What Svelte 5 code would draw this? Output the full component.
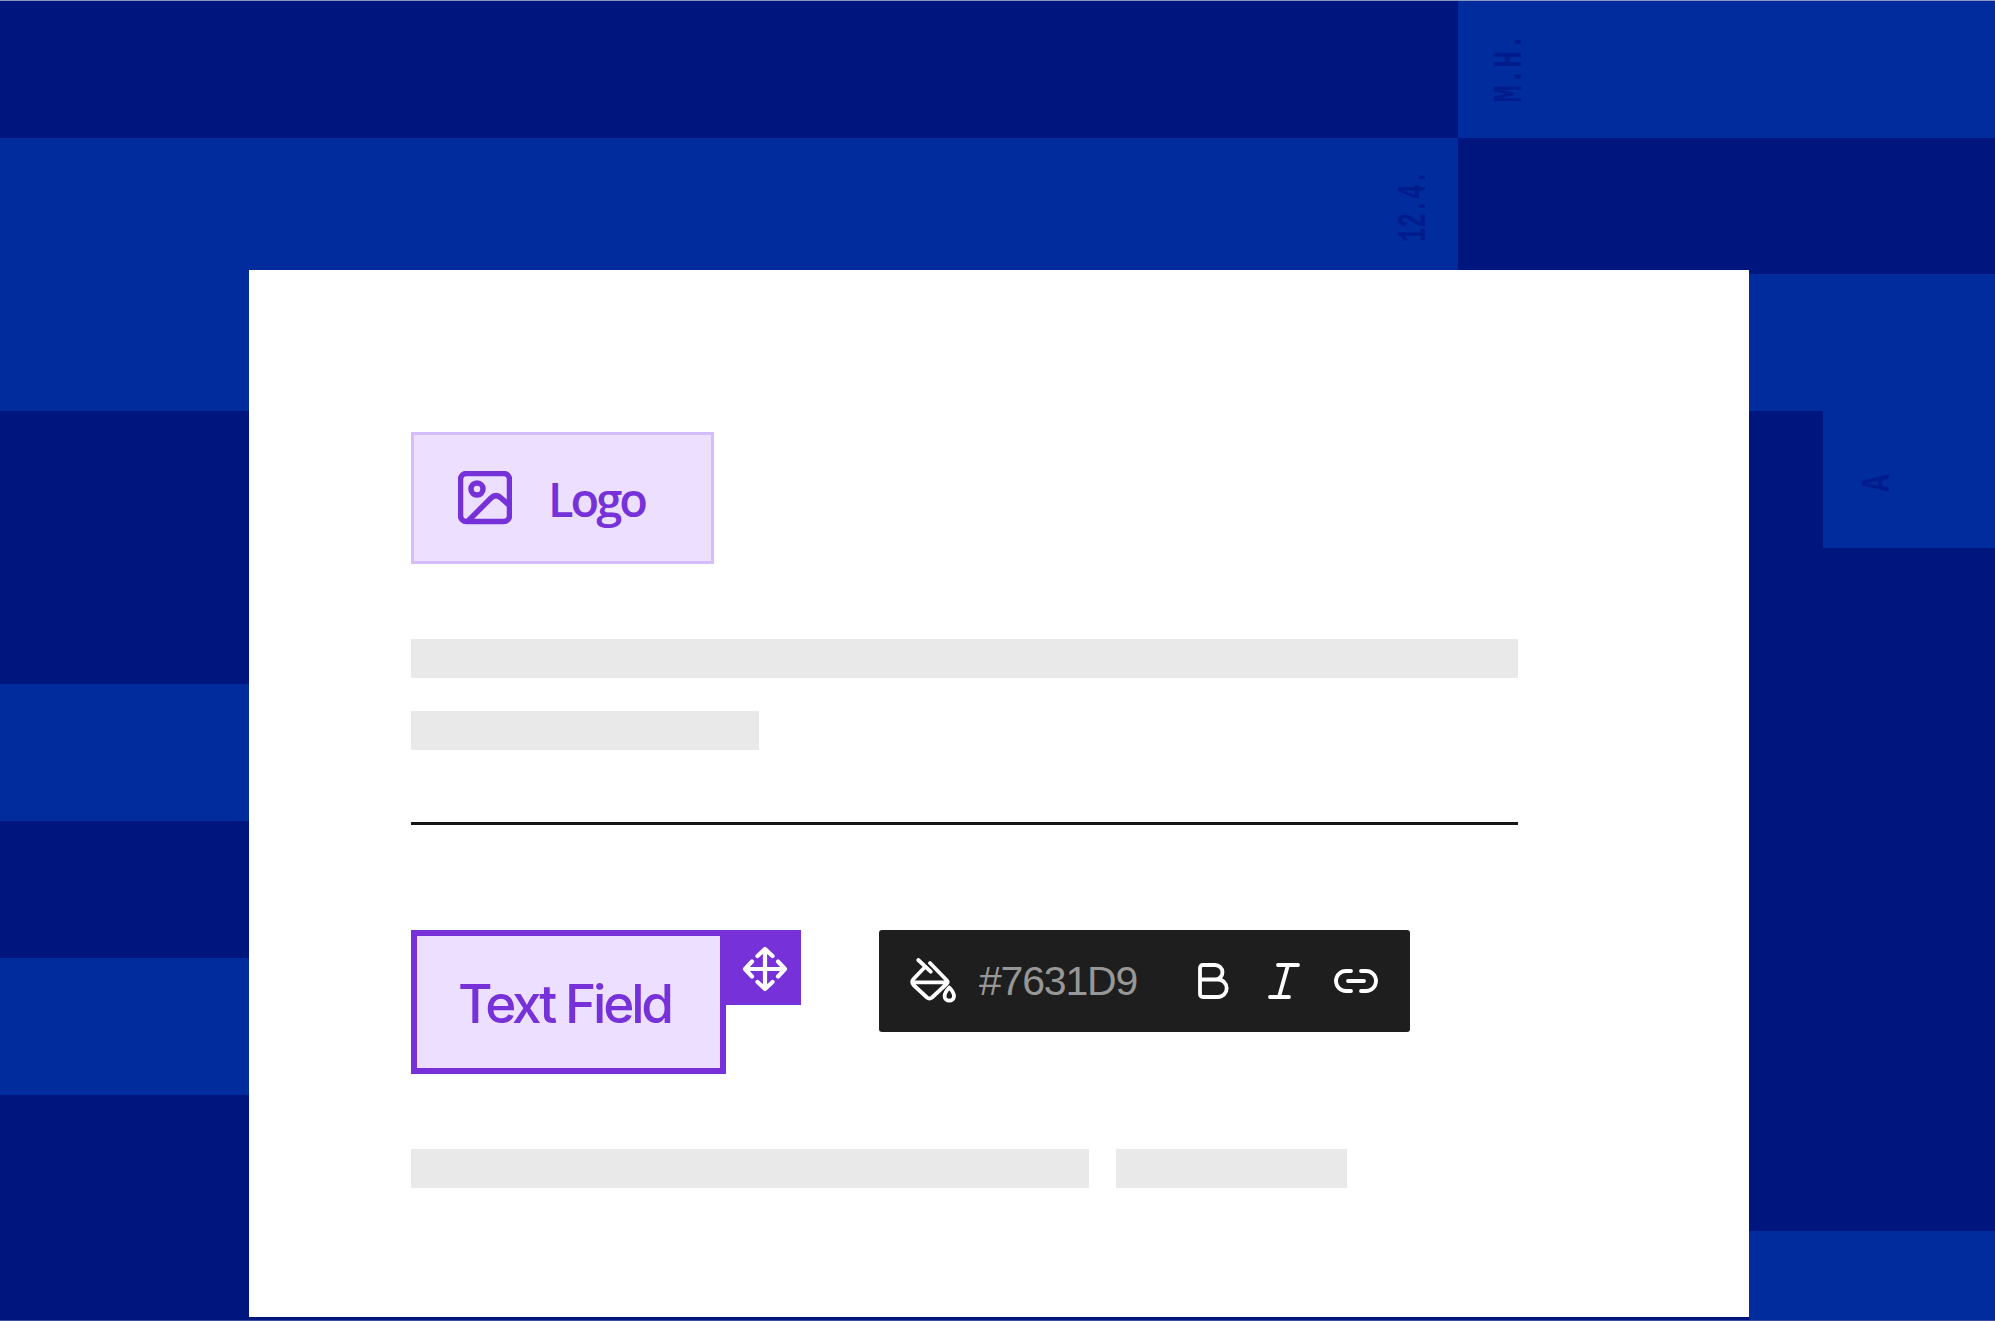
<script>
  // background strips, x widths in px, last segment fills the row
  const rows = [
    [{ w: 1458, c: "dark" }, { w: 537, c: "light", label: "M.H." }],
    [{ w: 1458, c: "light", label: "12.4." }, { w: 537, c: "dark" }],
    [{ w: 1995, c: "light" }],
    [{ w: 1823, c: "dark" }, { w: 172, c: "light", label: "A" }],
    [{ w: 1995, c: "dark" }],
    [{ w: 249, c: "light" }, { w: 1746, c: "dark" }],
    [{ w: 1995, c: "dark" }],
    [{ w: 249, c: "light" }, { w: 1746, c: "dark" }],
    [{ w: 1995, c: "dark" }],
    [{ w: 1749, c: "dark" }, { w: 246, c: "light" }],
  ];
</script>

<div class="page">
  <div class="strips">
    {#each rows as row}
      <div class="strip">
        {#each row as seg}
          <div class="seg {seg.c}" style="width: {seg.w}px">
            {#if seg.label}<span class="stamp stamp-{seg.label.length}">{seg.label}</span>{/if}
          </div>
        {/each}
      </div>
    {/each}
  </div>

  <div class="card">
    <div class="logo">
      <svg width="54" height="54" viewBox="0 0 54 54" fill="none" stroke="currentColor" stroke-width="5.5" stroke-linecap="round" stroke-linejoin="round">
        <rect x="2.5" y="2.5" width="49" height="48" rx="6" />
        <circle cx="19" cy="18" r="6" />
        <path d="M11 49 L33 27 Q38 22 43 27 L52 35" />
      </svg>
      <span>Logo</span>
    </div>

    <div class="bar full first"></div>
    <div class="bar short"></div>
    <div class="rule"></div>

    <div class="editor">
      <div class="field">
        <span>Text Field</span>
        <div class="grip">
          <svg width="46" height="46" viewBox="0 0 46 46" fill="none" stroke="currentColor" stroke-width="4.2" stroke-linecap="round" stroke-linejoin="round">
            <path d="M23 3 V43 M3 23 H43 M15.5 10 L23 3 L30.5 10 M15.5 36 L23 43 L30.5 36 M10 15.5 L3 23 L10 30.5 M36 15.5 L43 23 L36 30.5" />
          </svg>
        </div>
      </div>

      <div class="toolbar">
        <svg class="bucket" width="48" height="46" viewBox="0 0 48 46" fill="none" stroke="currentColor" stroke-width="3.8" stroke-linecap="round" stroke-linejoin="round">
          <path d="M8.3 2 L20.7 13.7" />
          <path d="M15 9 L3.5 21 Q1 24 3.5 27 L17 39.5 Q19.5 41.5 22 39.5 L36.5 26 Q39 24 36.5 22 L20 5 M4 24.3 H36" />
          <path d="M39.3 29.5 Q44 34.5 44 38 A4.7 4.7 0 0 1 34.6 38 Q34.6 34.5 39.3 29.5 Z" />
        </svg>
        <span class="hex">#7631D9</span>
        <svg class="b" width="32" height="38" viewBox="0 0 32 38" fill="none" stroke="currentColor" stroke-width="3.8" stroke-linecap="round" stroke-linejoin="round">
          <path d="M3 6 Q3 3 6 3 H18 A7.5 7.25 0 0 1 18 17.5 H3 M18 17.5 H21 A8.7 8.75 0 0 1 21 35 H6 Q3 35 3 32 V6" />
        </svg>
        <svg class="i" width="34" height="38" viewBox="0 0 34 38" fill="none" stroke="currentColor" stroke-width="3.8" stroke-linecap="round" stroke-linejoin="round">
          <path d="M12 3 H32 M4 35 H23 M22 3 L13 35" />
        </svg>
        <svg class="link" width="46" height="26" viewBox="0 0 46 26" fill="none" stroke="currentColor" stroke-width="3.8" stroke-linecap="round" stroke-linejoin="round">
          <path d="M18 3 H13 A10 10 0 0 0 13 23 H18 M28 3 H33 A10 10 0 0 1 33 23 H28 M15 13 H31" />
        </svg>
      </div>
    </div>

    <div class="bars-row">
      <div class="bar wide"></div>
      <div class="bar tail"></div>
    </div>
  </div>
</div>

<style>
  :global(body) {
    margin: 0;
    background: #00167f;
  }

  .page {
    position: relative;
    box-sizing: border-box;
    width: 1995px;
    height: 1321px;
    overflow: hidden;
    border-top: 1px solid #8c96c4;
    border-bottom: 1px solid #3a4f9f;
    font-family: Inter, "Liberation Sans", sans-serif;
  }

  .strips {
    display: grid;
    grid-template-rows: repeat(9, 136.7px) 1fr;
    height: 100%;
  }

  .strip {
    display: flex;
  }

  .seg {
    position: relative;
    flex: none;
  }

  .dark {
    background: #00167f;
  }

  .light {
    background: #002c9e;
  }

  .stamp {
    position: absolute;
    color: #001c8c;
    font-family: "Liberation Mono", monospace;
    font-size: 40px;
    font-weight: 700;
    line-height: 1;
    white-space: nowrap;
    transform: rotate(-90deg) scaleX(0.72);
    transform-origin: center;
  }

  .stamp-4 {
    left: 5px;
    top: 47px;
  }

  .stamp-5 {
    left: 1355px;
    top: 48px;
    transform: rotate(-90deg) scaleX(0.6);
  }

  .stamp-1 {
    left: 44px;
    top: 52px;
  }

  .card {
    position: absolute;
    left: 249px;
    top: 269px;
    width: 1500px;
    height: 1047px;
    box-sizing: border-box;
    padding: 162px 231px 0 162px;
    background: #fff;
  }

  .logo {
    display: flex;
    align-items: center;
    gap: 36px;
    box-sizing: border-box;
    width: 303px;
    height: 132px;
    padding-left: 44px;
    background: #ecdfff;
    border: 3px solid #d5bdfc;
    color: #7631d9;
  }

  .logo span {
    margin-top: 2px;
    font-family: "Open Sans", sans-serif;
    font-size: 47px;
    font-weight: 600;
    letter-spacing: -3px;
    line-height: 1;
  }

  .bar {
    height: 39px;
    background: #e9e9e9;
  }

  .first {
    margin-top: 75px;
  }

  .short {
    width: 348px;
    margin-top: 33px;
  }

  .rule {
    height: 3px;
    margin-top: 72px;
    background: #141414;
  }

  .editor {
    display: flex;
    align-items: flex-start;
    gap: 153px;
    margin-top: 105px;
  }

  .field {
    position: relative;
    display: flex;
    align-items: center;
    box-sizing: border-box;
    width: 315px;
    height: 144px;
    padding-left: 41px;
    background: #ecdfff;
    border: 6px solid #7631d9;
    color: #7631d9;
    font-size: 53px;
    font-weight: 550;
    letter-spacing: -3.2px;
  }

  .field span {
    margin-top: 3px;
  }

  .grip {
    position: absolute;
    left: 303px;
    top: -6px;
    display: flex;
    align-items: center;
    justify-content: center;
    box-sizing: border-box;
    width: 81px;
    height: 75px;
    padding: 3px 0 0 9px;
    background: #7631d9;
    color: #fff;
  }

  .toolbar {
    display: flex;
    align-items: center;
    flex: none;
    box-sizing: border-box;
    width: 531px;
    height: 102px;
    padding-left: 31px;
    background: #1e1e1e;
    border-radius: 3px;
    color: #fff;
  }

  .toolbar svg {
    flex: none;
  }

  .hex {
    flex: none;
    width: 158px;
    margin-left: 21px;
    color: #979797;
    font-family: "Liberation Sans", sans-serif;
    font-size: 41px;
    letter-spacing: -1.2px;
    white-space: nowrap;
  }

  .b {
    margin-left: 60px;
  }

  .i {
    margin-left: 37px;
  }

  .link {
    margin-left: 33px;
  }

  .bars-row {
    display: flex;
    gap: 27px;
    margin-top: 75px;
  }

  .wide {
    width: 678px;
  }

  .tail {
    width: 231px;
  }
</style>
